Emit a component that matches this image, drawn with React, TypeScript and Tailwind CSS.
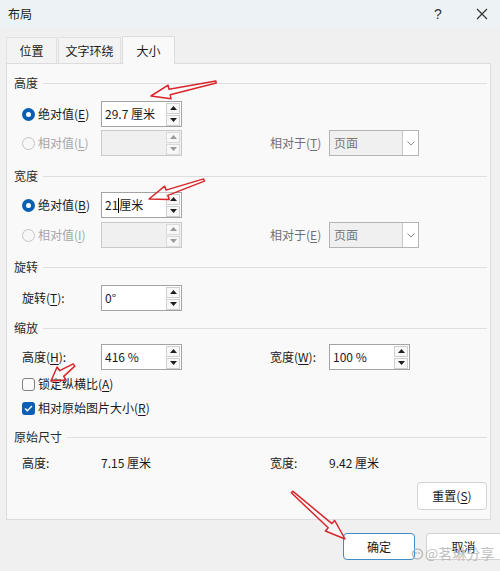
import React from "react";

const U = ({ c }: { c: string }) => <span className="underline underline-offset-2">{c}</span>;

function Spinner({ disabled }: { disabled?: boolean }) {
  const tri = disabled ? "#9a9a9a" : "#1f1f1f";
  const btn = "w-[14px] h-[11px] flex items-center justify-center border " + (disabled ? "border-[#dadada] bg-[#f7f7f7]" : "border-[#cfcfcf] bg-[#f8f8f8]");
  return (
    <div className="flex flex-col gap-px mr-px">
      <div className={btn}>
        <svg width="7" height="4" viewBox="0 0 7 4"><path d="M0 4 L3.5 0 L7 4 Z" fill={tri} /></svg>
      </div>
      <div className={btn}>
        <svg width="7" height="4" viewBox="0 0 7 4"><path d="M0 0 L3.5 4 L7 0 Z" fill={tri} /></svg>
      </div>
    </div>
  );
}

function SpinInput({ value, disabled, caret }: { value?: string; disabled?: boolean; caret?: boolean }) {
  return (
    <div
      className={
        "w-[81px] h-[26px] flex items-center justify-between border " +
        (disabled ? "border-[#c9c9c9] bg-[#f0f0f0]" : "border-[#a3a3a3] bg-white")
      }
    >
      <div className="pl-[3px] text-[12px] text-[#1a1a1a] flex items-center whitespace-nowrap">
        {caret ? (
          <>
            <span>21</span>
            <span className="inline-block w-px h-[15px] bg-black" />
            <span>厘米</span>
          </>
        ) : (
          value
        )}
      </div>
      <Spinner disabled={disabled} />
    </div>
  );
}

function Dropdown() {
  return (
    <div className="w-[90px] h-[26px] flex border border-[#b4b4b4] bg-[#f0f0f0]">
      <div className="flex-1 flex items-center pl-[4px] text-[12px] text-[#777]">页面</div>
      <div className="w-[16px] border-l border-[#c8c8c8] bg-white flex items-center justify-center">
        <svg width="8" height="5" viewBox="0 0 8 5"><path d="M0.5 0.5 L4 4 L7.5 0.5" fill="none" stroke="#8a8a8a" strokeWidth="1" /></svg>
      </div>
    </div>
  );
}

function Radio({ checked }: { checked?: boolean }) {
  return checked ? (
    <div className="w-[13px] h-[13px] rounded-full bg-[#0a5fb4] flex items-center justify-center">
      <div className="w-[5px] h-[5px] rounded-full bg-white" />
    </div>
  ) : (
    <div className="w-[13px] h-[13px] rounded-full border border-[#c4c4c4] bg-[#f7f7f7]" />
  );
}

function Checkbox({ checked }: { checked?: boolean }) {
  return checked ? (
    <div className="w-[13px] h-[13px] rounded-[3px] bg-[#0a5fb4] flex items-center justify-center">
      <svg width="9" height="7" viewBox="0 0 9 7"><path d="M1 3.6 L3.3 5.8 L8 1" fill="none" stroke="white" strokeWidth="1.4" /></svg>
    </div>
  ) : (
    <div className="w-[13px] h-[13px] rounded-[3px] border border-[#808080] bg-[#fbfbfb]" />
  );
}

function Header({ text, mt }: { text: string; mt: string }) {
  return (
    <div className={"flex items-center h-[16px] pl-[7px] pr-[3px] " + mt}>
      <span className="text-[12px] text-[#2a2a2a] mr-[5px] whitespace-nowrap">{text}</span>
      <div className="flex-1 h-px bg-[#dedede]" />
    </div>
  );
}

function arrowPts(tx: number, ty: number, sx: number, sy: number, L: number, W: number, w: number) {
  const dx = sx - tx, dy = sy - ty;
  const len = Math.hypot(dx, dy);
  const ux = dx / len, uy = dy / len;
  const nx = -uy, ny = ux;
  const bx = tx + ux * L, by = ty + uy * L;
  const p = [
    [tx, ty],
    [bx + nx * W, by + ny * W],
    [bx + nx * w, by + ny * w],
    [sx + nx * w * 0.4, sy + ny * w * 0.4],
    [sx - nx * w * 0.4, sy - ny * w * 0.4],
    [bx - nx * w, by - ny * w],
    [bx - nx * W, by - ny * W],
  ];
  return p.map((q) => q[0].toFixed(1) + "," + q[1].toFixed(1)).join(" ");
}

export default function App() {
  const arrows = [
    arrowPts(151, 96, 216, 82, 19, 7, 2.8),
    arrowPts(149, 199, 204, 180, 19, 7, 2.8),
    arrowPts(51, 381, 74, 365, 13, 8, 3.5),
    arrowPts(345, 539, 292, 492, 20, 7, 2.8),
  ];
  return (
    <div className="w-[500px] h-[571px] bg-[#f0f0f0] relative overflow-hidden font-['Noto_Sans_CJK_SC','Noto_Sans',sans-serif] text-[#1a1a1a]">
      {/* title bar */}
      <div className="h-[27px] bg-[#edf2f5] flex items-center pl-[8px] relative">
        <span className="text-[12px] text-[#1a1a1a]">布局</span>
        <span className="absolute left-[434px] top-[4px] text-[14px] text-[#333] font-['Liberation_Sans',sans-serif]">?</span>
        <svg className="absolute left-[476px] top-[8px]" width="12" height="12" viewBox="0 0 12 12">
          <path d="M1 1 L11 11 M11 1 L1 11" stroke="#333" strokeWidth="1.2" />
        </svg>
      </div>

      {/* tabs */}
      <div className="flex items-end gap-px pl-[6px] mt-[9px] h-[27px]">
        <div className="w-[51px] h-[26px] bg-[#f3f3f3] border border-b-0 border-[#e2e2e2] flex items-center justify-center text-[12px]">位置</div>
        <div className="w-[63px] h-[26px] bg-[#f3f3f3] border border-b-0 border-[#e2e2e2] flex items-center justify-center text-[12px]">文字环绕</div>
        <div className="w-[53px] h-[28px] -mb-px relative z-10 bg-[#f9f9f9] border border-b-0 border-[#dcdcdc] flex items-center justify-center text-[12px]">大小</div>
      </div>

      {/* panel */}
      <div className="ml-[6px] w-[485px] h-[457px] bg-[#f9f9f9] border border-[#dcdcdc] flex flex-col text-[12px]">
        <Header text="高度" mt="mt-[11px]" />
        <div className="flex items-center h-[26px] mt-[10px] pl-[15px]">
          <div className="w-[79px] flex items-center gap-[3px]"><Radio checked /><span>绝对值(<U c="E" />)</span></div>
          <SpinInput value="29.7 厘米" />
        </div>
        <div className="flex items-center h-[26px] mt-[3px] pl-[15px]">
          <div className="w-[79px] flex items-center gap-[3px] text-[#a6a6a6]"><Radio /><span>相对值(<U c="L" />)</span></div>
          <SpinInput disabled />
          <div className="w-[88px]" />
          <div className="w-[59px] text-[#707070]">相对于(<U c="T" />)</div>
          <Dropdown />
        </div>

        <Header text="宽度" mt="mt-[12px]" />
        <div className="flex items-center h-[26px] mt-[8px] pl-[15px]">
          <div className="w-[79px] flex items-center gap-[3px]"><Radio checked /><span>绝对值(<U c="B" />)</span></div>
          <SpinInput caret />
        </div>
        <div className="flex items-center h-[26px] mt-[4px] pl-[15px]">
          <div className="w-[79px] flex items-center gap-[3px] text-[#a6a6a6]"><Radio /><span>相对值(<U c="I" />)</span></div>
          <SpinInput disabled />
          <div className="w-[88px]" />
          <div className="w-[59px] text-[#707070]">相对于(<U c="E" />)</div>
          <Dropdown />
        </div>

        <Header text="旋转" mt="mt-[11px]" />
        <div className="flex items-center h-[26px] mt-[10px] pl-[15px]">
          <div className="w-[79px]">旋转(<U c="T" />):</div>
          <SpinInput value="0°" />
        </div>

        <Header text="缩放" mt="mt-[9px]" />
        <div className="flex items-center h-[26px] mt-[8px] pl-[15px]">
          <div className="w-[79px]">高度(<U c="H" />):</div>
          <SpinInput value="416 %" />
          <div className="w-[88px]" />
          <div className="w-[59px]">宽度(<U c="W" />):</div>
          <SpinInput value="100 %" />
        </div>
        <div className="flex items-center h-[16px] mt-[6px] pl-[15px] gap-[3px]">
          <Checkbox /><span>锁定纵横比(<U c="A" />)</span>
        </div>
        <div className="flex items-center h-[16px] mt-[8px] pl-[15px] gap-[3px]">
          <Checkbox checked /><span>相对原始图片大小(<U c="R" />)</span>
        </div>

        <Header text="原始尺寸" mt="mt-[13px]" />
        <div className="flex items-center h-[16px] mt-[10px] pl-[15px]">
          <div className="w-[79px]">高度:</div>
          <div className="w-[169px]">7.15 厘米</div>
          <div className="w-[59px]">宽度:</div>
          <div>9.42 厘米</div>
        </div>
        <div className="flex justify-end mt-[11px] pr-[3px]">
          <div className="w-[70px] h-[28px] rounded-[4px] border border-[#d2d2d2] bg-white flex items-center justify-center">重置(<U c="S" />)</div>
        </div>
      </div>

      {/* bottom buttons */}
      <div className="flex justify-end gap-[11px] mt-[13px] text-[12px]">
        <div className="w-[72px] h-[27px] rounded-[4px] border border-[#3f8cc8] bg-white flex items-center justify-center">确定</div>
        <div className="w-[74px] h-[27px] rounded-l-[4px] border border-r-0 border-[#d2d2d2] bg-white flex items-center justify-center">取消</div>
      </div>

      {/* watermark */}
      <div className="absolute left-[411px] top-[543px] flex items-center gap-[1px] text-[14px] text-[#b8b8b8] opacity-90">
        <svg width="13" height="13" viewBox="0 0 13 13"><circle cx="6.5" cy="7" r="5" fill="none" stroke="#b8b8b8" strokeWidth="1.5" /><circle cx="5" cy="6" r="0.9" fill="#b8b8b8" /><circle cx="8" cy="6" r="0.9" fill="#b8b8b8" /></svg>
        <span>@茗琳分享</span>
      </div>

      {/* annotation arrows */}
      <svg className="absolute inset-0 pointer-events-none" width="500" height="571" viewBox="0 0 500 571">
        {arrows.map((pts, i) => (
          <polygon key={i} points={pts} fill="rgba(255,255,255,0.35)" stroke="#d8262c" strokeWidth="1.5" strokeLinejoin="round" />
        ))}
      </svg>
    </div>
  );
}
